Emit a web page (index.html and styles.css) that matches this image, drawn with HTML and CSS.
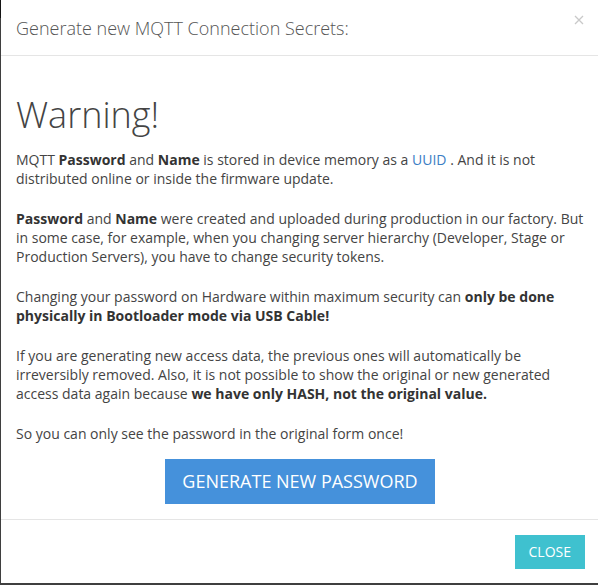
FILE: index.html
```html
<!DOCTYPE html>
<html>
<head>
<meta charset="utf-8">
<link rel="stylesheet" href="styles.css">
</head>
<body>
<div class="modal">
  <div class="modal-header">
    <h4 class="modal-title">Generate new MQTT Connection Secrets:</h4>
    <button class="close" aria-label="Close">
      <svg width="10" height="10" viewBox="0 0 10 10"><path d="M1 1L9 9M9 1L1 9" stroke="#c9c9c9" stroke-width="1.3" fill="none"/></svg>
    </button>
  </div>
  <div class="modal-body">
    <h1 class="warning">Warning!</h1>
    <p>MQTT <b>Password</b> and <b>Name</b> is stored in device memory as a <a class="link" href="#">UUID</a> . And it is not distributed online or inside the firmware update.</p>
    <p><b>Password</b> and <b>Name</b> were created and uploaded during production in our factory. But in some case, for example, when you changing server hierarchy (Developer, Stage or Production Servers), you have to change security tokens.</p>
    <p>Changing your password on Hardware within maximum security can <b>only be done physically in Bootloader mode via USB Cable!</b></p>
    <p>If you are generating new access data, the previous ones will automatically be irreversibly removed. Also, it is not possible to show the original or new generated access data again because <b>we have only HASH, not the original value.</b></p>
    <p>So you can only see the password in the original form once!</p>
    <div class="actions">
      <button class="btn-generate">GENERATE NEW PASSWORD</button>
    </div>
  </div>
  <div class="modal-footer">
    <button class="btn-close">CLOSE</button>
  </div>
</div>
</body>
</html>
```
FILE: styles.css
```css
html, body {
  margin: 0;
  padding: 0;
}
body {
  width: 598px;
  height: 585px;
  overflow: hidden;
  background: linear-gradient(#141414 0, #141414 18px, #3f3f3f 18px);
  font-family: "Open Sans", "DejaVu Sans", sans-serif;
  color: #444;
}
.modal {
  margin-left: 1px;
  width: 598px;
  height: 583px;
  background: #fff;
  display: flex;
  flex-direction: column;
}
.modal-header {
  display: flex;
  align-items: flex-start;
  padding: 16px 15px 14px;
  border-bottom: 1px solid #e5e5e5;
}
.modal-title {
  flex: 1;
  margin: 0;
  font-size: 18px;
  font-weight: 300;
  line-height: 25px;
  color: #555;
}
.close {
  border: 0;
  background: none;
  padding: 0;
  margin: -1px -1px 0 0;
  width: 12px;
  height: 10px;
  display: flex;
  align-items: center;
  justify-content: center;
}
.modal-body {
  padding: 15px;
  flex: 1;
}
.warning {
  margin: 24px 0 15px;
  font-size: 36px;
  font-weight: 300;
  line-height: 40px;
  color: #444;
}
.modal-body p {
  margin: 0 0 21px;
  font-size: 14px;
  line-height: 19px;
}
.modal-body b {
  font-weight: 700;
  color: #333;
}
.link {
  color: #3a7dc4;
  text-decoration: none;
}
.actions {
  display: flex;
  justify-content: center;
  margin-top: -5px;
}
.btn-generate {
  border: 0;
  background: #4591db;
  color: #fff;
  font-family: "Open Sans", "DejaVu Sans", sans-serif;
  font-size: 18px;
  line-height: 25px;
  padding: 10px 17px;
}
.modal-footer {
  display: flex;
  justify-content: flex-end;
  padding: 15px 14px 14px;
  border-top: 1px solid #e5e5e5;
}
.btn-close {
  border: 0;
  background: #3fc1cf;
  color: #fff;
  font-family: "Open Sans", "DejaVu Sans", sans-serif;
  font-size: 14px;
  line-height: 20px;
  padding: 7px 14px;
}
```
